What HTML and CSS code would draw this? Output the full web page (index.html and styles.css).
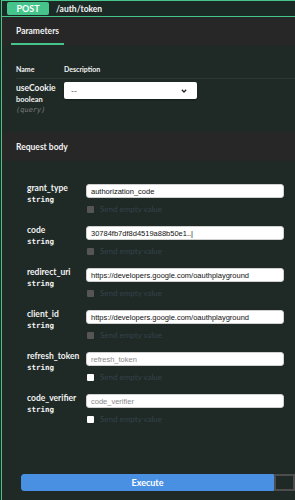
FILE: index.html
```html
<!DOCTYPE html>
<html lang="en">
<head>
    <meta charset="UTF-8">
    <meta name="viewport" content="width=device-width, initial-scale=1.0">
    <title>POST /auth/token</title>
    <link rel="stylesheet" href="styles.css">
</head>
<body>
    <div class="opblock">
        <!-- Summary bar -->
        <div class="summary">
            <span class="method">POST</span>
            <span class="path">/auth/token</span>
        </div>

        <!-- Parameters -->
        <div class="section-header">
            <div class="tab">Parameters</div>
        </div>
        <div class="params">
            <div class="params-head">
                <span class="col-name">Name</span>
                <span>Description</span>
            </div>
            <div class="param-row">
                <div class="col-name">
                    <div class="param-name">useCookie</div>
                    <div class="param-type">boolean</div>
                    <div class="param-in">(query)</div>
                </div>
                <div class="select">
                    <span>--</span>
                    <svg width="6" height="4" viewBox="0 0 6 4"><path d="M0.8 0.8 L3 3 L5.2 0.8" fill="none" stroke="#222" stroke-width="1.3"/></svg>
                </div>
            </div>
        </div>

        <!-- Request body -->
        <div class="section-header">
            <h4 class="section-title">Request body</h4>
        </div>
        <div class="fields">
            <div class="field">
                <div class="field-label">
                    <div class="field-name">grant_type</div>
                    <div class="field-type">string</div>
                </div>
                <div class="field-input">
                    <input class="text" type="text" value="authorization_code">
                    <label class="empty-value disabled"><span class="box"></span>Send empty value</label>
                </div>
            </div>
            <div class="field">
                <div class="field-label">
                    <div class="field-name">code</div>
                    <div class="field-type">string</div>
                </div>
                <div class="field-input">
                    <input class="text" type="text" value="30784fb7df8d4519a88b50e1..|">
                    <label class="empty-value disabled"><span class="box"></span>Send empty value</label>
                </div>
            </div>
            <div class="field">
                <div class="field-label">
                    <div class="field-name">redirect_uri</div>
                    <div class="field-type">string</div>
                </div>
                <div class="field-input">
                    <input class="text" type="text" value="https://developers.google.com/oauthplayground">
                    <label class="empty-value disabled"><span class="box"></span>Send empty value</label>
                </div>
            </div>
            <div class="field">
                <div class="field-label">
                    <div class="field-name">client_id</div>
                    <div class="field-type">string</div>
                </div>
                <div class="field-input">
                    <input class="text" type="text" value="https://developers.google.com/oauthplayground">
                    <label class="empty-value disabled"><span class="box"></span>Send empty value</label>
                </div>
            </div>
            <div class="field">
                <div class="field-label">
                    <div class="field-name">refresh_token</div>
                    <div class="field-type">string</div>
                </div>
                <div class="field-input">
                    <input class="text" type="text" placeholder="refresh_token">
                    <label class="empty-value"><span class="box"></span>Send empty value</label>
                </div>
            </div>
            <div class="field">
                <div class="field-label">
                    <div class="field-name">code_verifier</div>
                    <div class="field-type">string</div>
                </div>
                <div class="field-input">
                    <input class="text" type="text" placeholder="code_verifier">
                    <label class="empty-value"><span class="box"></span>Send empty value</label>
                </div>
            </div>
        </div>

        <!-- Execute -->
        <div class="execute-wrapper">
            <button class="btn execute">Execute</button>
            <button class="btn clear"></button>
        </div>
    </div>
</body>
</html>
```

FILE: styles.css
```css
/* General page settings */
body {
    margin: 0;
    background: #1f2a27;
    font-family: Lato, 'Liberation Sans', sans-serif;
    color: #f2f2f2;
    overflow: hidden;
}

/* Operation block with green edge */
.opblock {
    margin-left: 1px;
    border-left: 1px solid #45c58c;
    border-top: 1px solid #45c58c;
    min-height: 499px;
}

/* Summary bar */
.summary {
    display: flex;
    align-items: center;
    height: 15px;
    padding-left: 5px;
    background: #1c2a25;
    border-bottom: 1px solid #45c58c;
}

.method {
    width: 42px;
    height: 13px;
    line-height: 13px;
    text-align: center;
    background: #45c58c;
    border-radius: 2px;
    font-size: 9px;
    font-weight: 700;
    color: #fff;
}

.path {
    margin-left: 7px;
    font-size: 8.5px;
    font-weight: 700;
    color: #f5f5f5;
}

/* Grey section headers */
.section-header {
    display: flex;
    align-items: center;
    height: 29px;
    padding: 0 9px;
    background: #272727;
}

.tab {
    align-self: flex-end;
    padding: 2px 5px 0;
    margin-bottom: 1px;
    line-height: 24px;
    font-size: 8.5px;
    font-weight: 700;
    border-bottom: 2px solid #45c58c;
}

.section-title {
    margin: 0 0 0 5px;
    font-size: 8.5px;
    font-weight: 700;
}

/* Parameters table */
.params {
    padding: 18px 0 0 14px;
    height: 68px;
}

.params-head {
    display: flex;
    font-size: 7px;
    font-weight: 700;
    line-height: 10px;
    padding-bottom: 4px;
    border-bottom: 1px solid rgba(255, 255, 255, 0.06);
}

.col-name {
    width: 48px;
}

.param-row {
    display: flex;
    padding-top: 3px;
}

.param-name {
    font-size: 8.5px;
    font-weight: 700;
    line-height: 12px;
}

.param-type {
    font-size: 7.5px;
    font-weight: 700;
    line-height: 11px;
}

.param-in {
    font-family: 'DejaVu Sans Mono', monospace;
    font-size: 7px;
    font-style: italic;
    line-height: 11px;
    color: #7a7a7a;
}

.select {
    display: flex;
    align-items: center;
    justify-content: space-between;
    box-sizing: border-box;
    width: 133px;
    height: 17px;
    padding: 0 10px 0 7px;
    background: #fff;
    border-radius: 2px;
    font-size: 8px;
    color: #333;
    box-shadow: 0 1px 2px rgba(0, 0, 0, 0.4);
}

/* Request body fields */
.fields {
    padding: 21px 0 0 25px;
    height: 292px;
}

.field {
    display: flex;
    height: 42px;
}

.field-label {
    width: 59px;
}

.field-name {
    font-size: 8.5px;
    font-weight: 700;
    line-height: 12px;
}

.field-type {
    font-family: 'DejaVu Sans Mono', monospace;
    font-size: 7.5px;
    font-weight: 700;
    line-height: 12px;
}

.field-input {
    padding-top: 2px;
}

.text {
    display: block;
    box-sizing: border-box;
    width: 198px;
    height: 14px;
    margin: 0;
    padding: 0 4px;
    border: 1px solid #d0d0d0;
    border-radius: 3px;
    background: #fff;
    font-family: 'Liberation Sans', Arial, sans-serif;
    font-size: 7.5px;
    color: #111;
}

.text::placeholder {
    color: #8a8a8a;
}

.empty-value {
    display: flex;
    align-items: center;
    margin-top: 7px;
    font-size: 8px;
    line-height: 8px;
    color: #34424a;
}

.box {
    width: 7px;
    height: 7px;
    margin: 0 6px 0 1px;
    background: #fff;
    border-radius: 1px;
}

.disabled .box {
    background: #555;
}

/* Execute buttons */
.execute-wrapper {
    display: flex;
    padding-left: 19px;
}

.btn {
    height: 17px;
    margin: 0;
    font-family: Lato, 'Liberation Sans', sans-serif;
    font-size: 9px;
    font-weight: 700;
    color: #fff;
}

.execute {
    width: 253px;
    background: #4a90e2;
    border: 1px solid #4a90e2;
    border-radius: 3px 0 0 3px;
}

.clear {
    flex: 1;
    background: #1f2a27;
    border: 2px solid #4d4d4d;
}
```
